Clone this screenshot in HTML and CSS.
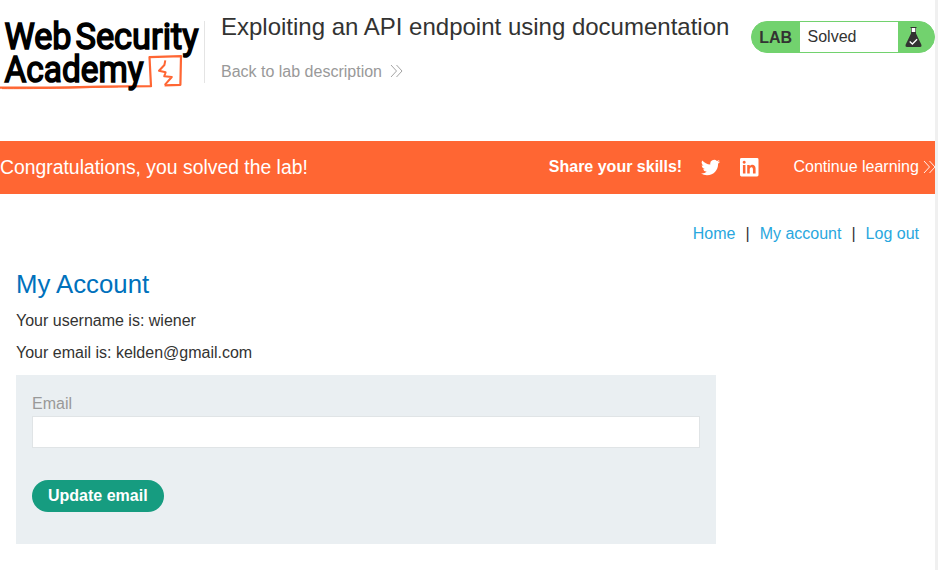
FILE: index.html
```html
<!DOCTYPE html>
<html lang="en">
<head>
<meta charset="utf-8">
<title>Exploiting an API endpoint using documentation</title>
<link rel="stylesheet" href="styles.css">
</head>
<body>
<div class="page">
  <header class="lab-header">
    <svg class="logo" width="204" height="80" viewBox="0 15 204 80" role="img">
      <g class="logo-text">
        <text x="4.5" y="49" textLength="67" lengthAdjust="spacingAndGlyphs">Web</text>
        <text x="75.5" y="49" textLength="123" lengthAdjust="spacingAndGlyphs">Security</text>
      </g>
      <path class="logo-line" d="M0 87.6C35 88.2 95 86.4 151 86.2L149.5 57.2L181 56.2L180.4 84.8L164.6 85.3"/>
      <path class="logo-line thin" d="M2 88.6C30 88.9 80 88 118 86.8"/>
      <path class="logo-line bolt" d="M165.3 60.4L164.4 65L159 70.7L165.6 72.3L164.2 76.3L171.8 77L164.8 84.8"/>
      <g class="logo-text">
        <text x="4.5" y="81.5" textLength="139" lengthAdjust="spacingAndGlyphs">Academy</text>
      </g>
    </svg>
    <div class="title-box">
      <h1>Exploiting an API endpoint using documentation</h1>
      <a class="back">Back to lab description
        <svg width="13" height="14" viewBox="0 0 13 14"><path d="M1 1L6.5 7L1 13M6.5 1L12 7L6.5 13"/></svg>
      </a>
    </div>
    <div class="status">
      <span class="status-lab">LAB</span>
      <span class="status-text">Solved</span>
      <span class="status-icon">
        <svg width="17" height="22" viewBox="0 0 17 22">
          <path fill="#fff" d="M6 2h5v6H6z"/>
          <path fill="#333332" d="M5.5 1h6v1h-6zM6 2h.7v4H6zM10.3 2h.7v4h-.7zM6 6h5v1.5L16.3 18.5Q17 21 15 21H2Q0 21 .7 18.5L6 7.5z"/>
          <path fill="none" stroke="#fff" stroke-width="1.3" d="M4.7 15.5l2.7 2.5 4.7-4.7"/>
        </svg>
      </span>
    </div>
  </header>
  <section class="banner">
    <h4>Congratulations, you solved the lab!</h4>
    <span class="share">Share your skills!</span>
    <svg class="twitter" width="19" height="19" viewBox="0 0 24 24"><path d="M23.95 4.57a10 10 0 0 1-2.82.77 4.96 4.96 0 0 0 2.16-2.72c-.95.55-2 .95-3.13 1.18a4.92 4.92 0 0 0-8.38 4.48C7.69 8.09 4.07 6.13 1.64 3.16a4.93 4.93 0 0 0 1.52 6.57 4.9 4.9 0 0 1-2.23-.61v.06c0 2.38 1.7 4.37 3.95 4.82a5 5 0 0 1-2.21.09 4.94 4.94 0 0 0 4.6 3.42A9.87 9.87 0 0 1 0 19.54a13.99 13.99 0 0 0 7.56 2.21c9.05 0 14-7.5 14-13.98 0-.21 0-.42-.02-.63a9.94 9.94 0 0 0 2.46-2.55z"/></svg>
    <svg class="linkedin" width="18.5" height="18.5" viewBox="0 0 19 19"><path fill-rule="evenodd" d="M1.5 0h16Q19 0 19 1.5v16Q19 19 17.5 19h-16Q0 19 0 17.5v-16Q0 0 1.5 0zM3 7.2v8.8h2.6V7.2zM4.3 2.8a1.55 1.55 0 1 0 .01 0zM7.4 7.2V16H10v-4.4c0-2.7 3.3-2.9 3.3 0V16H16v-5.2c0-4.5-4.6-4.7-6-2.3V7.2z"/></svg>
    <a class="continue">Continue learning
      <svg width="13" height="14" viewBox="0 0 13 14"><path d="M1 1L6.5 7L1 13M6.5 1L12 7L6.5 13"/></svg>
    </a>
  </section>
  <nav class="top-links">
    <a>Home</a><span>|</span><a>My account</a><span>|</span><a>Log out</a>
  </nav>
  <main class="account">
    <h2>My Account</h2>
    <p>Your username is: wiener</p>
    <p>Your email is: kelden@gmail.com</p>
    <form class="email-form">
      <label for="email">Email</label>
      <input id="email" type="email">
      <button type="button">Update email</button>
    </form>
  </main>
</div>
</body>
</html>
```
FILE: styles.css
```css
* { box-sizing: border-box; }
body {
  margin: 0;
  background: #f0f0f0;
  color: #333332;
  font: 16px/24px "Liberation Sans", Arial, sans-serif;
  overflow: hidden;
}
h1, h2, h4, p { margin: 0; font-weight: 400; }
.page { width: 935px; height: 570px; background: #fff; }
.lab-header { height: 141px; display: flex; align-items: flex-start; }
.logo { flex: none; margin-top: 15px; overflow: visible; }
.logo-text { font: 400 36.5px Roboto, sans-serif; fill: #000; stroke: #000; stroke-width: 1.6px; }
.logo-line { fill: none; stroke: #ff6633; stroke-width: 2.2px; stroke-linejoin: round; }
.thin { stroke-width: 1px; }
.bolt { stroke-width: 2px; }
.title-box { width: 547px; height: 62px; margin-top: 21px; padding-left: 16px; border-left: 1px solid #e4e4e4; }
h1 { font-size: 24px; line-height: 28px; margin-top: -8px; white-space: nowrap; }
.back { display: flex; align-items: center; gap: 8px; margin-top: 19px; color: #999; }
.back svg { margin-top: -2px; }
.back svg, .continue svg { fill: none; stroke: currentColor; stroke-width: .9px; }
.status { display: flex; width: 184px; height: 32px; margin-top: 21px; border: 1px solid #72d26e; border-radius: 16px; background: #72d26e; line-height: 30px; overflow: hidden; }
.status-lab { width: 48px; padding-left: 7.2px; font-weight: 700; line-height: 32px; }
.status-text { width: 98px; padding-left: 7.5px; background: #fff; }
.status-icon { display: flex; padding: 4px 0 0 6.5px; }
.banner { display: flex; align-items: center; height: 53px; background: #ff6633; color: #fff; fill: #fff; white-space: nowrap; overflow: hidden; }
h4 { width: 548.8px; padding-bottom: 1px; font-size: 19.36px; flex: none; }
.share { width: 152px; padding-bottom: 2px; font-weight: 700; flex: none; }
.twitter { flex: none; margin-top: -1px; }
.linkedin { flex: none; margin: 0 34.7px 0 20.5px; }
.continue { display: flex; align-items: center; gap: 4.5px; padding-bottom: 2px; flex: none; }
.continue svg { margin-top: 1px; }
.top-links { display: flex; justify-content: flex-end; gap: 10px; padding: 28px 16px 0 0; }
.top-links a { color: #29a7de; }
.account { padding: 22px 16px 0; }
h2 { color: #0071bc; font-size: 25.75px; line-height: 32px; margin-bottom: 9px; }
.account p { margin-bottom: 8px; }
.email-form { width: 700px; height: 169px; margin-top: 10px; padding: 17px 16px 0; background: #eaeff2; }
.email-form label { display: block; height: 24px; color: #999; }
.email-form input { display: block; width: 668px; height: 32px; border: 1px solid #e0e4e6; background: #fff; }
.email-form button { height: 32px; margin-top: 32px; padding: 0 16px; border: 0; border-radius: 16px; background: #169c80; color: #fff; font: 700 16px "Liberation Sans", Arial, sans-serif; }
```
